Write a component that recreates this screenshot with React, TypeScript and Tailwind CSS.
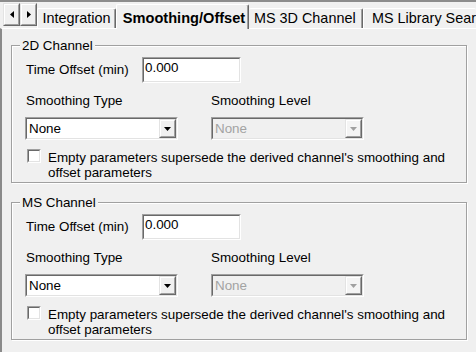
import React from 'react';

type BoxProps = { className?: string; inner?: string; children?: React.ReactNode };

// sunken 3D edge, like a classic edit box
const Sunken = ({ className = '', inner = 'bg-white', children }: BoxProps) => (
  <div className={`border border-t-[#a0a0a0] border-l-[#a0a0a0] border-b-white border-r-white ${className}`}>
    <div className={`h-full w-full border border-t-[#696969] border-l-[#696969] border-b-[#e3e3e3] border-r-[#e3e3e3] ${inner}`}>
      {children}
    </div>
  </div>
);

// raised 3D edge, like a classic push button
const Raised = ({ className = '', inner = 'bg-[#f0f0f0]', children }: BoxProps) => (
  <div className={`border border-t-[#e3e3e3] border-l-[#e3e3e3] border-b-[#696969] border-r-[#696969] ${className}`}>
    <div className={`flex h-full w-full items-center justify-center border border-t-white border-l-white border-b-[#a0a0a0] border-r-[#a0a0a0] ${inner}`}>
      {children}
    </div>
  </div>
);

const DownArrow = ({ color }: { color: string }) => (
  <svg width="7" height="4" viewBox="0 0 7 4">
    <path d="M0 0h7L3.5 4z" fill={color} />
  </svg>
);

const Select = ({ disabled = false }: { disabled?: boolean }) => (
  <Sunken className="h-[23px] w-[153px]" inner={disabled ? 'bg-[#f0f0f0]' : 'bg-white'}>
    <div className="flex h-full items-center">
      <span className={`flex-1 pl-[2px] text-[13.4px] leading-[15px] ${disabled ? 'text-[#a3a3a3]' : 'text-black'}`}>None</span>
      <Raised className="h-full w-[17px]" inner={disabled ? 'bg-[#f4f4f4]' : 'bg-[#f0f0f0]'}>
        <DownArrow color={disabled ? '#a0a0a0' : '#000'} />
      </Raised>
    </div>
  </Sunken>
);

const ChannelGroup = ({ title, className = '' }: { title: string; className?: string }) => (
  <fieldset className={`w-[456px] border border-[#a0a0a0] shadow-[inset_1px_1px_0_#fff,1px_1px_0_#fff] ${className}`}>
    <legend className="ml-[8px] bg-[#f0f0f0] px-[2px] text-[13.4px] leading-[15px]">{title}</legend>
    <div className="pb-[2px] pl-[13px] pt-[4px]">
      <div className="flex items-center">
        <span className="w-[117px] pl-[1px] pb-[1px] text-[13.4px] leading-[15px]">Time Offset (min)</span>
        <Sunken className="h-[26px] w-[99px]">
          <div className="pl-[1px] pt-[1px] text-[13.4px] leading-[15px]">0.000</div>
        </Sunken>
      </div>

      <div className="mt-[10px] grid grid-cols-[186px_auto]">
        <span className="pl-[1px] text-[13.4px] leading-[15px]">Smoothing Type</span>
        <span className="text-[13.4px] leading-[15px]">Smoothing Level</span>
        <div className="mt-[9px]">
          <Select />
        </div>
        <div className="mt-[9px]">
          <Select disabled />
        </div>
      </div>

      <div className="mt-[9px] flex items-start gap-[7px] pl-[2px]">
        <Sunken className="h-[14px] w-[14px] shrink-0" />
        <p className="w-[414px] pt-[1px] text-[13.4px] leading-[15px]">
          Empty parameters supersede the derived channel's smoothing and offset parameters
        </p>
      </div>
    </div>
  </fieldset>
);

export default function App() {
  return (
    <div className="flex h-[352px] w-[476px] flex-col overflow-hidden border-t-2 border-t-[#8c8c8c] bg-[#f0f0f0] font-['Liberation_Sans',Arial,sans-serif] text-black">
      {/* tab strip */}
      <div className="relative z-10 flex h-[26px] items-end">
        <div className="mb-[2px] ml-[3px] flex self-start pt-[1px]">
          <Raised className="h-[23px] w-[17px]">
            <svg width="4" height="7" viewBox="0 0 4 7">
              <path d="M4 0v7L0 3.5z" fill="#000" />
            </svg>
          </Raised>
          <Raised className="h-[23px] w-[17px]">
            <svg width="4" height="7" viewBox="0 0 4 7">
              <path d="M0 0v7l4-3.5z" fill="#000" />
            </svg>
          </Raised>
        </div>
        <div className="flex h-[20px] w-[79px] items-center justify-center rounded-t-[2px] border-l border-r border-t border-l-white border-r-[#696969] border-t-white text-[14.4px] shadow-[inset_-1px_0_0_#a0a0a0]">
          Integration
        </div>
        <div className="-mb-px flex h-[25px] w-[133px] items-start justify-center whitespace-nowrap rounded-t-[2px] border-l border-r border-t border-l-white border-r-[#696969] border-t-white bg-[#f0f0f0] pl-[3px] pt-[3px] text-[14.6px] font-bold shadow-[inset_-1px_0_0_#a0a0a0]">
          Smoothing/Offset
        </div>
        <div className="flex h-[20px] w-[114px] items-center whitespace-nowrap rounded-t-[2px] border-r border-t border-r-[#696969] border-t-white pl-[5px] text-[14.4px] shadow-[inset_-1px_0_0_#a0a0a0]">
          MS 3D Channel
        </div>
        <div className="flex h-[20px] flex-1 items-center overflow-hidden whitespace-nowrap rounded-t-[2px] border-l border-t border-l-white border-t-white pl-[8px] text-[14.4px]">
          MS Library Search
        </div>
      </div>

      {/* page */}
      <div className="flex-1 border-l-2 border-t border-l-[#8a8a8a] border-t-white pl-[9px] pt-[9px]">
        <ChannelGroup title="2D Channel" />
        <ChannelGroup title="MS Channel" className="mt-[12px]" />
      </div>
    </div>
  );
}
